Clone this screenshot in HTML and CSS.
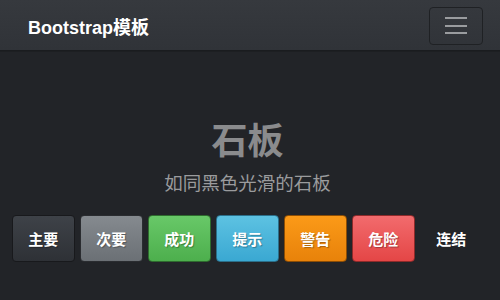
FILE: index.html
```html
<!DOCTYPE html>
<html lang="zh">
	<head>
		<meta charset="utf-8">
		<title>Bootstrap模板</title>
		<link rel="stylesheet" href="styles.css">
	</head>
	<body>
		<nav class="navbar">
			<a class="brand" href="#">Bootstrap模板</a>
			<button class="toggler" aria-label="menu">
				<span class="bar"></span>
				<span class="bar"></span>
				<span class="bar"></span>
			</button>
		</nav>
		<div class="hero">
			<h1>石板</h1>
			<p class="lead">如同黑色光滑的石板</p>
		</div>
		<div class="buttons">
			<button class="btn btn-primary">主要</button>
			<button class="btn btn-secondary">次要</button>
			<button class="btn btn-success">成功</button>
			<button class="btn btn-info">提示</button>
			<button class="btn btn-warning">警告</button>
			<button class="btn btn-danger">危险</button>
			<button class="btn btn-link">连结</button>
		</div>
	</body>
</html>
```

FILE: styles.css
```css
body {
	margin: 0;
	background-color: #222428;
	font-family: "Liberation Sans", "Noto Sans CJK SC", sans-serif;
	color: #fff;
	height: 300px;
	overflow: hidden;
}

.navbar {
	display: flex;
	align-items: center;
	justify-content: space-between;
	height: 51px;
	padding: 0 17px 0 28px;
	background: linear-gradient(#36393e, #303338);
	border-bottom: 1px solid #1a1c1f;
	box-sizing: border-box;
	box-shadow: 0 1px 0 #1d1f22;
}

.brand {
	color: #fff;
	text-decoration: none;
	font-size: 18px;
	font-weight: bold;
	font-family: "Liberation Sans", "Noto Sans CJK SC", sans-serif;
	margin-top: 1px;
}

.toggler {
	width: 54px;
	height: 38px;
	margin-top: 1px;
	border: 1px solid #1f2124;
	border-radius: 4px;
	background: transparent;
	display: flex;
	flex-direction: column;
	align-items: center;
	justify-content: center;
	gap: 5.5px;
	padding: 0;
}

.toggler .bar {
	display: block;
	width: 22px;
	height: 2px;
	background-color: #9a9c9f;
}

.hero {
	text-align: center;
	padding-top: 67px;
	padding-right: 5px;
}

h1 {
	margin: 0;
	font-family: "Noto Sans CJK SC", sans-serif;
	font-size: 36px;
	font-weight: bold;
	line-height: 40px;
	color: #8a8b8d;
}

.lead {
	margin: 12px 0 0 0;
	font-family: "Noto Sans CJK SC", sans-serif;
	font-size: 18.5px;
	line-height: 24px;
	color: #9a9b9d;
}

.buttons {
	display: flex;
	gap: 5.5px;
	padding: 0 0 0 12px;
	margin-top: 21px;
}

.btn {
	width: 62.5px;
	height: 47px;
	border: 1px solid rgba(0, 0, 0, 0.5);
	border-radius: 4px;
	font-family: "Noto Sans CJK SC", sans-serif;
	font-size: 15px;
	font-weight: bold;
	color: #fff;
	text-shadow: 1px 1px 1px rgba(0, 0, 0, 0.3);
	padding: 0;
}

.btn-primary {
	background: linear-gradient(#3e4248, #2e3136);
	border-color: #18191c;
}

.btn-secondary {
	background: linear-gradient(#858a8f, #6b7075);
	border-color: #2a2c30;
}

.btn-success {
	background: linear-gradient(#68c868, #4daf4d);
	border-color: #2e6b2e;
}

.btn-info {
	background: linear-gradient(#5dc2e2, #3aa8d2);
	border-color: #2b6f8a;
}

.btn-warning {
	background: linear-gradient(#fb9a18, #e8820a);
	border-color: #8c4d05;
}

.btn-danger {
	background: linear-gradient(#f26b6d, #e44646);
	border-color: #8e2a2a;
}

.btn-link {
	background: transparent;
	border-color: transparent;
	text-shadow: none;
}
```
